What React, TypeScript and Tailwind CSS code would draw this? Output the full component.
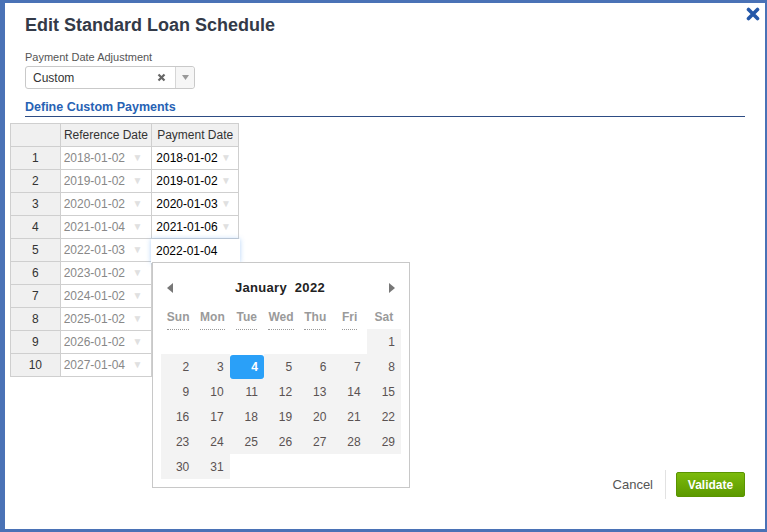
import React from "react";

const rows = [
  ["2018-01-02", "2018-01-02"],
  ["2019-01-02", "2019-01-02"],
  ["2020-01-02", "2020-01-03"],
  ["2021-01-04", "2021-01-06"],
  ["2022-01-03", "2022-01-04"],
  ["2023-01-02", ""],
  ["2024-01-02", ""],
  ["2025-01-02", ""],
  ["2026-01-02", ""],
  ["2027-01-04", ""],
];

const weekDays = ["Sun", "Mon", "Tue", "Wed", "Thu", "Fri", "Sat"];

// January 2022 starts on a Saturday
const days: (number | null)[] = [
  null, null, null, null, null, null, 1,
  ...Array.from({ length: 30 }, (_, i) => i + 2),
  null, null, null, null, null,
];

function Arrow() {
  return <span className="text-[10px] text-[#e0e0e0] leading-none">▼</span>;
}

function DatePicker() {
  return (
    <div className="absolute left-[147px] top-[259px] w-[258px] h-[226px] bg-white border border-[#c8c8c8] z-20">
      <div className="flex items-center justify-between px-[14px] pt-[15px] h-[35px]">
        <svg width="6" height="10" viewBox="0 0 6 10">
          <path d="M6 0 L0 5 L6 10 Z" fill="#777" />
        </svg>
        <div className="text-[13px] font-bold text-[#222] tracking-[0.3px] pr-[2px]">
          January&nbsp; 2022
        </div>
        <svg width="6" height="10" viewBox="0 0 6 10">
          <path d="M0 0 L6 5 L0 10 Z" fill="#777" />
        </svg>
      </div>
      <div className="grid grid-cols-7 w-[240px] ml-[8px] mt-[12px] h-[20px]">
        {weekDays.map((d) => (
          <div key={d} className="flex justify-center">
            <span className="text-[12px] font-bold text-[#9a9a9a] leading-[15px] border-b border-dotted border-[#9a9a9a]">
              {d}
            </span>
          </div>
        ))}
      </div>
      <div className="grid grid-cols-7 w-[240px] ml-[8px] mt-[-1px]">
        {days.map((d, i) =>
          d === null ? (
            <div key={i} className="h-[25px]" />
          ) : d === 4 ? (
            <div
              key={i}
              className="h-[24px] mt-px bg-[#2aa0f8] rounded-[3px] flex items-center justify-end pr-[6px] text-[12px] font-bold text-white"
            >
              {d}
            </div>
          ) : (
            <div
              key={i}
              className="h-[25px] bg-[#f3f3f3] flex items-center justify-end pr-[6px] text-[12px] text-[#5a5252]"
            >
              {d}
            </div>
          )
        )}
      </div>
    </div>
  );
}

function ScheduleTable() {
  return (
    <div className="relative -ml-[15px] mt-[6px] w-[229px]">
      <table className="border-collapse text-[12px]">
        <thead>
          <tr className="h-[23px]">
            <th className="w-[50px] border border-[#cfcfcf] bg-[#f0f0f0]" />
            <th className="w-[92px] border border-[#cfcfcf] bg-[#f0f0f0] font-normal text-[#333] px-[3px]">
              Reference Date
            </th>
            <th className="w-[87px] border border-[#cfcfcf] bg-[#f0f0f0] font-normal text-[#333] px-[3px]">
              Payment Date
            </th>
          </tr>
        </thead>
        <tbody>
          {rows.map(([ref, pay], i) => (
            <tr key={i} className="h-[23px]">
              <td className="border border-[#cfcfcf] bg-[#f0f0f0] text-center text-[#333]">
                {i + 1}
              </td>
              <td className="border border-[#cfcfcf] bg-white text-[#888] pl-[3px] pr-[9px]">
                <div className="flex items-center justify-between">
                  <span>{ref}</span>
                  <Arrow />
                </div>
              </td>
              <td className="border border-[#cfcfcf] bg-white text-black pl-[4px] pr-[7px]">
                {pay && i !== 4 ? (
                  <div className="flex items-center justify-between">
                    <span>{pay}</span>
                    <Arrow />
                  </div>
                ) : null}
              </td>
            </tr>
          ))}
        </tbody>
      </table>
      <div className="absolute left-[141px] top-[116px] w-[89px] h-[24px] bg-white shadow-[0_0_5px_rgba(90,160,240,0.45)] text-[12px] text-black pl-[5px] flex items-center z-10">
        2022-01-04
      </div>
    </div>
  );
}

export default function App() {
  return (
    <div className="w-[767px] h-[532px] bg-[#4a72b6] pt-[3px] pl-[5px] pr-[2px] pb-[3px] font-['Liberation_Sans',Arial,sans-serif]">
      <div className="relative h-full bg-white flex flex-col px-[20px]">
        <button className="absolute right-[5px] top-[4px]" aria-label="close">
          <svg width="14" height="14" viewBox="0 0 14 14">
            <path d="M2.5 2.5 L11.5 11.5 M11.5 2.5 L2.5 11.5" stroke="#2457a8" strokeWidth="3.6" strokeLinecap="round" />
          </svg>
        </button>
        <h1 className="pt-[11px] text-[18px] leading-[22px] font-bold text-[#333a48]">
          Edit Standard Loan Schedule
        </h1>
        <div className="mt-[15px] text-[11px] leading-[13px] text-[#555]">Payment Date Adjustment</div>
        <div className="mt-[2px] w-[170px] h-[23px] border border-[#c9c9c9] rounded-[3px] flex items-stretch text-[12px] text-[#333]">
          <div className="flex-1 flex items-center pl-[7px]">Custom</div>
          <div className="flex items-center pr-[9px]">
            <svg width="9" height="9" viewBox="0 0 9 9">
              <path d="M1.5 1.5 L7.5 7.5 M7.5 1.5 L1.5 7.5" stroke="#666" strokeWidth="2.2" />
            </svg>
          </div>
          <div className="w-[19px] border-l border-[#d6d6d6] bg-[#f6f6f6] rounded-r-[3px] flex items-center justify-center">
            <svg width="7" height="5" viewBox="0 0 7 5">
              <path d="M0 0 L7 0 L3.5 5 Z" fill="#999" />
            </svg>
          </div>
        </div>
        <div className="mt-[11px] text-[12.5px] leading-[15px] font-bold text-[#2762b4]">
          Define Custom Payments
        </div>
        <div className="mt-[1px] h-px bg-[#2d4c84]" />
        <ScheduleTable />
        <DatePicker />
        <div className="mt-auto mb-[30px] flex items-center justify-end">
          <span className="text-[13px] text-[#555] mr-[12px]">Cancel</span>
          <div className="w-px h-[29px] bg-[#e2e2e2] mr-[10px]" />
          <button className="w-[69px] h-[25px] rounded-[2px] bg-gradient-to-b from-[#7cbb0c] to-[#5c9900] border border-[#5a9400] text-white text-[12px] font-bold">
            Validate
          </button>
        </div>
      </div>
    </div>
  );
}
